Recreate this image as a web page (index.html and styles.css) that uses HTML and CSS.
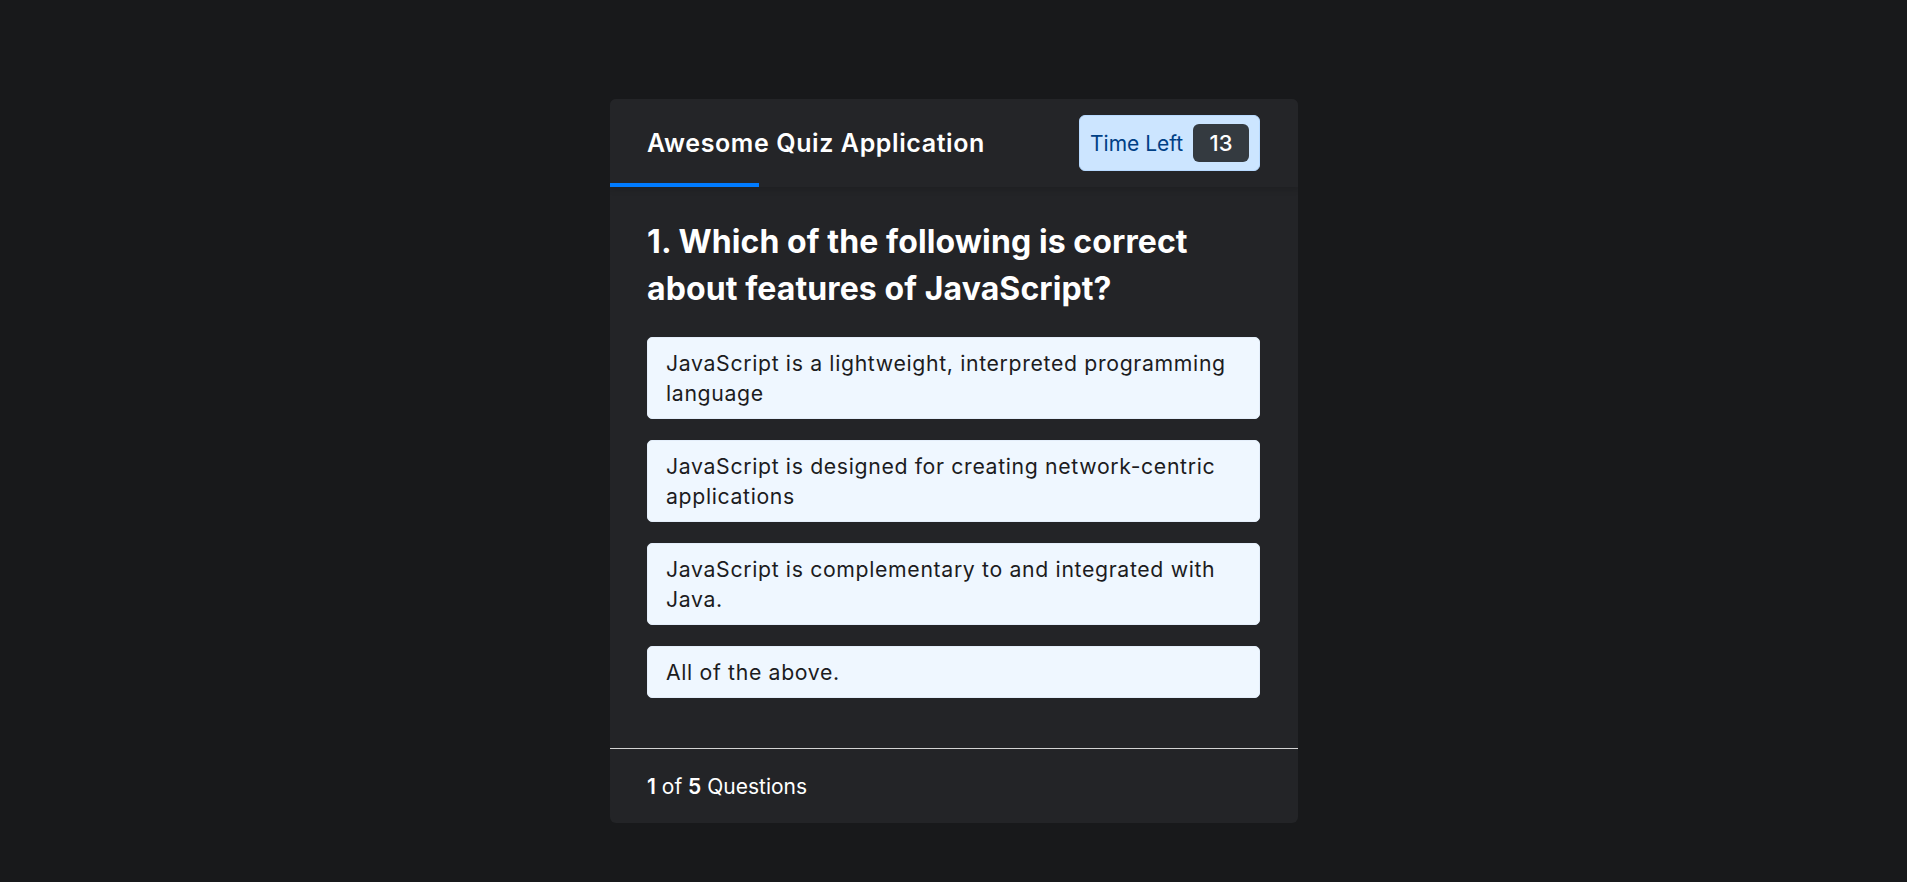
FILE: index.html
```html
<!DOCTYPE html>
<html lang="en">
<head>
<meta charset="utf-8">
<title>Awesome Quiz Application</title>
<link rel="stylesheet" href="styles.css">
</head>
<body>
<div class="quiz-box">
  <header class="quiz-header">
    <div class="title">Awesome Quiz Application</div>
    <div class="timer">
      <div class="time-left-txt">Time Left</div>
      <div class="timer-sec">13</div>
    </div>
    <div class="time-line"></div>
  </header>
  <section class="quiz-body">
    <div class="que-text">1. Which of the following is correct about features of JavaScript?</div>
    <div class="option-list">
      <div class="option">JavaScript is a lightweight, interpreted programming language</div>
      <div class="option">JavaScript is designed for creating network-centric applications</div>
      <div class="option">JavaScript is complementary to and integrated with Java.</div>
      <div class="option">All of the above.</div>
    </div>
  </section>
  <footer class="quiz-footer">
    <div class="total-que"><span class="num">1</span> of <span class="num">5</span> Questions</div>
  </footer>
</div>
</body>
</html>
```
FILE: styles.css
```css
* {
  box-sizing: border-box;
}

body {
  margin: 0;
  background: #18191b;
  font-family: Inter, "Open Sans", "Liberation Sans", sans-serif;
  color: #ffffff;
}

.quiz-box {
  width: 688px;
  margin: 99px auto 0;
  background: #232427;
  border-radius: 6px;
  overflow: hidden;
}

.quiz-header {
  position: relative;
  height: 88px;
  padding: 0 37.5px;
  display: flex;
  align-items: center;
  justify-content: space-between;
  background: #242528;
  box-shadow: 0 3px 5px 1px rgba(0, 0, 0, 0.1);
}

.title {
  font-size: 25px;
  font-weight: 600;
  letter-spacing: 0.6px;
  color: #ffffff;
}

.timer {
  width: 181px;
  height: 56px;
  padding: 0 10px;
  background: #cce5ff;
  border: 1px solid #b8daff;
  border-radius: 6px;
  display: flex;
  align-items: center;
  justify-content: space-between;
  color: #004085;
}

.time-left-txt {
  font-size: 21px;
  font-weight: 400;
}

.timer-sec {
  width: 56px;
  height: 38px;
  line-height: 38px;
  text-align: center;
  border-radius: 6px;
  background: #343a40;
  color: #ffffff;
  font-size: 22px;
  font-weight: 500;
}

.time-line {
  position: absolute;
  left: 0;
  bottom: 0;
  width: 149px;
  height: 4px;
  background: #007bff;
}

.quiz-body {
  padding: 31px 37.5px 50px;
}

.que-text {
  font-size: 32px;
  font-weight: 700;
  line-height: 47px;
  letter-spacing: 0.1px;
  color: #ffffff;
}

.option-list {
  padding-top: 25px;
  display: flex;
  flex-direction: column;
  gap: 21px;
}

.option {
  background: #eff7ff;
  border: 1px solid #e4eefa;
  border-radius: 5px;
  padding: 10px 18px;
  font-size: 21.25px;
  line-height: 30px;
  color: #1c1c1e;
  letter-spacing: 0.65px;
}

.quiz-footer {
  height: 75px;
  padding: 0 37.5px;
  display: flex;
  align-items: center;
  border-top: 1px solid #d3d3d3;
}

.total-que {
  font-size: 21px;
  font-weight: 400;
  color: #ffffff;
}

.total-que .num {
  font-weight: 600;
}
```
